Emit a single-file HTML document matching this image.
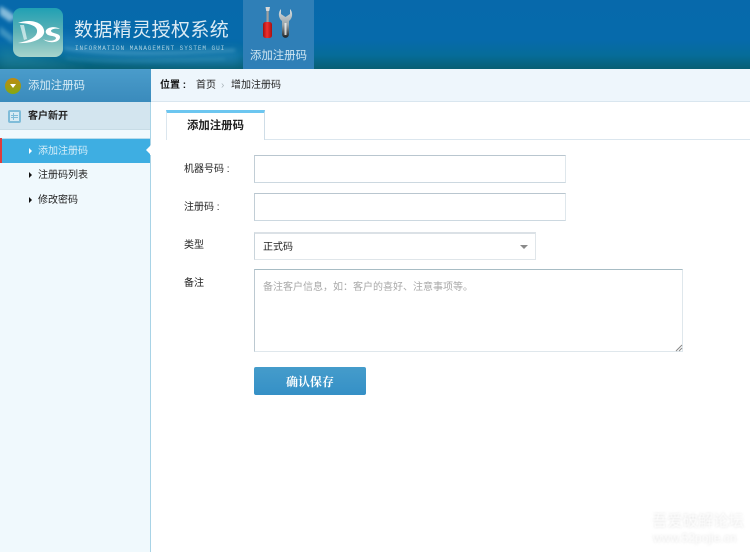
<!DOCTYPE html>
<html lang="zh"><head><meta charset="utf-8"><title>数据精灵授权系统</title>
<style>
*{box-sizing:border-box;margin:0;padding:0}
html,body{width:750px;height:552px;overflow:hidden;background:#fff}
body{position:relative;font-family:"Liberation Sans","Noto Sans CJK SC",sans-serif;font-size:10px;color:#222}
.a{position:absolute;white-space:nowrap}
.t{filter:blur(.3px)}
.box{position:absolute;background:#fff;border:1px solid #dfe7ec;border-top:1px solid #b9c6cf;border-left:1px solid #c2ced6;border-bottom:1px solid #ccd8e0}
.lab{position:absolute;white-space:nowrap;font-size:10px;line-height:12px;color:#222;filter:blur(.3px)}
</style></head><body>

<svg class="a" style="left:0;top:0" width="750" height="69" viewBox="0 0 750 69">
<defs>
<linearGradient id="bg" x1="0" y1="0" x2="0" y2="1"><stop offset="0" stop-color="#0769ab"/><stop offset=".58" stop-color="#066aab"/><stop offset=".8" stop-color="#066c99"/><stop offset="1" stop-color="#085f73"/></linearGradient>
<linearGradient id="lg" x1="0" y1="0" x2="0" y2="1"><stop offset="0" stop-color="#20a0b4"/><stop offset=".5" stop-color="#5fb2b6"/><stop offset="1" stop-color="#a9d4cc"/></linearGradient>
<linearGradient id="rd" x1="0" y1="0" x2="1" y2="0"><stop offset="0" stop-color="#a01010"/><stop offset=".45" stop-color="#f03030"/><stop offset="1" stop-color="#a81010"/></linearGradient>
<linearGradient id="wr" x1="0" y1="0" x2="0" y2="1"><stop offset="0" stop-color="#d8dfe2"/><stop offset=".55" stop-color="#9aa4a8"/><stop offset="1" stop-color="#1d2226"/></linearGradient>
<filter id="b1" filterUnits="userSpaceOnUse" x="-20" y="-20" width="320" height="110"><feGaussianBlur stdDeviation="1.800"/></filter>
<filter id="b3" filterUnits="userSpaceOnUse" x="-20" y="-20" width="320" height="110"><feGaussianBlur stdDeviation="5"/></filter>
</defs>
<rect width="750" height="69" fill="url(#bg)"/>
<path d="M60 34 C100 46 160 52 240 50 L240 64 C160 66 100 60 60 52Z" fill="#2f8cc4" opacity=".5" filter="url(#b3)"/>
<path d="M0 6 C6 9 11 12 16 17 L10 22 L0 15Z" fill="#d8f2fa" opacity=".6" filter="url(#b1)"/>
<path d="M0 26 L13 36 L13 44 L0 34Z" fill="#8fd0e0" opacity=".4" filter="url(#b1)"/>
<path d="M64 48 C110 55 165 54 235 50" stroke="#a8def0" stroke-width="1.500" fill="none" opacity=".45" filter="url(#b1)"/>
<path d="M66 58 C105 63 165 61 225 59" stroke="#6cc0d6" stroke-width="2" fill="none" opacity=".25" filter="url(#b1)"/>
<path d="M0 46 C25 54 50 62 90 69 L0 69Z" fill="#2f8fa4" opacity=".4" filter="url(#b3)"/>
<rect x="243" y="0" width="71" height="69" fill="#2f7fb7"/>
<rect x="13" y="8" width="50" height="49" rx="8" fill="url(#lg)"/>
<path d="M18 23 C28 19 42 21 44 30 C46 38 33 44 18 43 C29 41 38 37 37 30 C36 25 27 23 18 23Z" fill="#fff"/>
<path d="M24 25 L27 39 L24 40 L20 25Z" fill="#e8f6f6" opacity=".7"/>
<path d="M60 29 C54 25 44 28 46 33 C48 37 55 35 56 38 C56 41 48 42 43 39 C48 44 60 43 60 37 C60 33 52 34 51 31 C51 29 56 28 60 29Z" fill="#fff"/>
<rect x="266.500" y="8" width="2.200" height="15" fill="#a0a0a0"/>
<path d="M265.500 7h4.500l-.8 4h-3z" fill="#d8d8d8"/>
<rect x="263" y="22" width="9" height="16" rx="2.500" fill="url(#rd)"/>
<path d="M281 9 C278 12 278 18 282 21 L282 34 C282 39 289 39 289 34 L289 21 C293 18 293 12 290 9 L290 14 L285.500 17 L281 14Z" fill="url(#wr)"/>
<rect x="284.500" y="23" width="2" height="12" fill="#f2f2f2" opacity=".8"/>
</svg>

<div class="a t" style="left:74px;top:19px;font-size:19px;line-height:24px;color:#dcebf4;letter-spacing:.4px;font-weight:400">数据精灵授权系统</div>
<div class="a t" style="left:75px;top:45px;font-family:'Liberation Mono',monospace;font-size:6px;line-height:7px;color:#a8cfe0;letter-spacing:.95px">INFORMATION MANAGEMENT SYSTEM GUI</div>
<div class="a t" style="left:250px;top:49px;font-size:11.400px;line-height:14px;color:#cfe6f2">添加注册码</div>

<div class="a" style="left:0;top:69px;width:150px;height:483px;background:#f0f9fd"></div>
<div class="a" style="left:150px;top:69px;width:1px;height:483px;background:#a8d3e6"></div>
<div class="a" style="left:0;top:69px;width:151px;height:33px;background:linear-gradient(#4a9ccb,#3a8bbc)"></div>
<div class="a" style="left:5px;top:78px;width:16px;height:16px;border-radius:50%;background:linear-gradient(#c08a10,#84a812)"></div>
<div class="a" style="left:10px;top:84px;width:0;height:0;border:3px solid transparent;border-top:4px solid #fff;border-bottom:0"></div>
<div class="a t" style="left:28px;top:79px;font-size:11.400px;line-height:14px;color:#d6ebf5">添加注册码</div>

<div class="a" style="left:0;top:102px;width:150px;height:28px;background:#d3e5ef;border-bottom:1px solid #c8dce6"></div>
<div class="a" style="left:8px;top:110px;width:13px;height:13px;background:#d8ebf4;border:2px solid #7fbcd9;border-radius:2px"></div>
<div class="a" style="left:11px;top:113px;width:7px;height:7px;background:linear-gradient(#7fbcd9,#7fbcd9) 0 2px/7px 1px no-repeat,linear-gradient(#7fbcd9,#7fbcd9) 0 4px/7px 1px no-repeat,linear-gradient(#7fbcd9,#7fbcd9) 2px 0/1px 7px no-repeat"></div>
<div class="a t" style="left:28px;top:110px;font-size:10px;line-height:13px;font-weight:700;color:#222">客户新开</div>

<div class="a" style="left:0;top:138px;width:150px;height:25px;background:#3eaee2;border-top:1px solid #b6dbec"></div>
<div class="a" style="left:0;top:138px;width:1.500px;height:25px;background:#e03c3c"></div>
<div class="a" style="left:146px;top:145px;width:0;height:0;border:5px solid transparent;border-left:0;border-right:5px solid #fff"></div>
<div class="a" style="left:29px;top:148px;width:0;height:0;border:3px solid transparent;border-right:0;border-left:3px solid #fff"></div>
<div class="a t" style="left:38px;top:145px;font-size:10px;line-height:13px;color:#d7eef9">添加注册码</div>
<div class="a" style="left:29px;top:172px;width:0;height:0;border:3px solid transparent;border-right:0;border-left:3px solid #111"></div>
<div class="a t" style="left:38px;top:169px;font-size:10px;line-height:13px;color:#222">注册码列表</div>
<div class="a" style="left:29px;top:197px;width:0;height:0;border:3px solid transparent;border-right:0;border-left:3px solid #111"></div>
<div class="a t" style="left:38px;top:194px;font-size:10px;line-height:13px;color:#222">修改密码</div>

<div class="a" style="left:151px;top:69px;width:599px;height:33px;background:#eef6fc;border-bottom:1px solid #d9e6ef"></div>
<div class="a t" style="left:160px;top:79px;font-size:10px;line-height:13px;font-weight:700;color:#111">位置 :</div>
<div class="a t" style="left:196px;top:79px;font-size:10px;line-height:13px;color:#222">首页</div>
<div class="a" style="left:221px;top:79px;font-size:10px;line-height:13px;color:#aab4ba">›</div>
<div class="a t" style="left:231px;top:79px;font-size:10px;line-height:13px;color:#222">增加注册码</div>

<div class="a" style="left:166px;top:139px;width:584px;height:1px;background:#dbe6ee"></div>
<div class="a" style="left:166px;top:110px;width:99px;height:30px;background:#fff;border-top:3px solid #6cc6f0;border-left:1px solid #dbe6ee;border-right:1px solid #cfdde7"></div>
<div class="a t" style="left:187px;top:119px;font-size:11.400px;line-height:14px;font-weight:700;color:#222">添加注册码</div>
<div class="a" style="left:150px;top:146px;width:1px;height:9px;background:#fff"></div>

<div class="lab" style="left:184px;top:164px">机器号码 :</div>
<div class="box" style="left:254px;top:155px;width:312px;height:28px"></div>
<div class="lab" style="left:184px;top:202px">注册码 :</div>
<div class="box" style="left:254px;top:193px;width:312px;height:28px"></div>
<div class="lab" style="left:184px;top:240px">类型</div>
<div class="box" style="left:254px;top:232px;width:282px;height:28px;border:1px solid #e0e6ea;border-top:2px solid #dbe1e6;border-left-color:#c9d4db"></div>
<div class="a t" style="left:263px;top:241px;font-size:10px;line-height:13px;color:#222">正式码</div>
<div class="a" style="left:520px;top:245px;width:0;height:0;border:4px solid transparent;border-top:4px solid #8a8a8a;border-bottom:0"></div>
<div class="lab" style="left:184px;top:278px">备注</div>
<div class="box" style="left:254px;top:269px;width:429px;height:83px;border:1px solid #dfe7ec;border-top-color:#a7bcc4;border-left-color:#bcc9d1"></div>
<div class="a t" style="left:263px;top:281px;font-size:10px;line-height:13px;color:#a9a9a9">备注客户信息，如：客户的喜好、注意事项等。</div>
<svg class="a" style="left:675px;top:344px" width="8" height="8"><path d="M1 7L7 1M4 7L7 4" stroke="#888" stroke-width="1"/></svg>
<div class="a" style="left:254px;top:367px;width:112px;height:28px;border-radius:2px;background:linear-gradient(#459ccb,#3590c6)"></div>
<div class="a t" style="left:286px;top:375px;font-family:'Liberation Serif','Noto Serif CJK SC',serif;font-size:12px;line-height:14px;font-weight:700;color:#fff">确认保存</div>

<div class="a" style="left:652px;top:513px;font-size:15.300px;line-height:18px;color:#fff;text-shadow:0 0 2px rgba(190,190,190,.6);filter:blur(.4px)">吾爱破解论坛</div>
<div class="a" style="left:653px;top:532px;font-size:12px;line-height:12px;color:#fff;text-shadow:0 0 2px rgba(190,190,190,.6);filter:blur(.4px)">www.52pojie.cn</div>
</body></html>
